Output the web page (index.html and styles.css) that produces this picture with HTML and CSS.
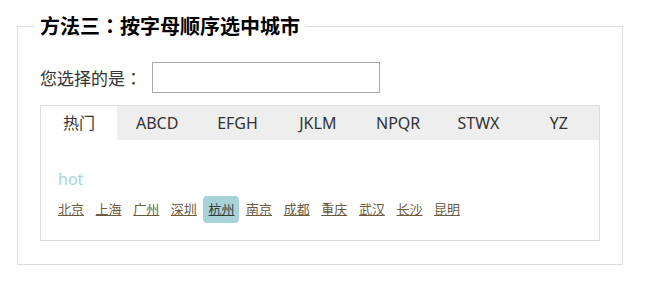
FILE: index.html
```html
<!DOCTYPE html>
<html lang="zh-CN">
<head>
    <meta charset="UTF-8">
    <title>城市选择</title>
    <link rel="stylesheet" href="styles.css">
</head>
<body>
    <fieldset class="picker">
        <legend>方法三<span class="colon" lang="ja">：</span>按字母顺序选中城市</legend>

        <div class="form-row">
            <label for="city">您选择的是<span class="colon" lang="ja">：</span></label>
            <input type="text" id="city">
        </div>

        <div class="tab-box">
            <ul class="tabs">
                <li class="active">热门</li>
                <li>ABCD</li>
                <li>EFGH</li>
                <li>JKLM</li>
                <li>NPQR</li>
                <li>STWX</li>
                <li>YZ</li>
            </ul>
            <div class="tab-panel">
                <p class="group-title">hot</p>
                <div class="cities">
                    <a href="#">北京</a>
                    <a href="#">上海</a>
                    <a href="#">广州</a>
                    <a href="#">深圳</a>
                    <a href="#" class="current">杭州</a>
                    <a href="#">南京</a>
                    <a href="#">成都</a>
                    <a href="#">重庆</a>
                    <a href="#">武汉</a>
                    <a href="#">长沙</a>
                    <a href="#">昆明</a>
                </div>
            </div>
        </div>
    </fieldset>
</body>
</html>
```

FILE: styles.css
```css
/* 基本 */
body {
    margin: 0;
    padding: 11px 0 0;
    font-family: 'Noto Sans', 'Noto Sans CJK SC', sans-serif;
    color: #333;
    background: #fff;
}

/* 外枠 */
.picker {
    width: 560px;
    margin: 0 0 0 17px;
    padding: 0 22px 23px;
    border: 1px solid #ddd;
}

.picker legend {
    margin-left: -6px;
    padding: 0 6px;
    font-family: 'Noto Sans CJK SC', sans-serif;
    font-size: 20px;
    font-weight: bold;
    color: #000;
    line-height: 30px;
}

/* 全角コロンを中央寄せで表示 */
.colon {
    font-family: 'Noto Sans CJK JP', sans-serif;
}

/* 入力欄 */
.form-row {
    display: flex;
    align-items: center;
    margin-top: 21px;
}

.form-row label {
    font-family: 'Noto Sans CJK SC', sans-serif;
    font-size: 17px;
    color: #333;
    margin-right: 10px;
}

.form-row input {
    width: 222px;
    height: 25px;
    padding: 2px;
    border: 1px solid #aaa;
    font-size: 14px;
}

/* タブ */
.tab-box {
    margin-top: 12px;
    border: 1px solid #ddd;
    height: 134px;
}

.tabs {
    display: flex;
    margin: 0;
    padding: 0;
    list-style: none;
    background: #eee;
}

.tabs li {
    flex: 1;
    height: 34px;
    line-height: 34px;
    text-align: center;
    font-size: 16px;
    color: #333;
}

.tabs li.active {
    background: #fff;
    flex: 0 0 76px;
}

.tab-panel {
    padding: 26px 17px 0;
}

.group-title {
    margin: 0;
    font-size: 16px;
    line-height: 26px;
    color: #a9d5da;
}

.cities {
    display: flex;
    gap: 1.6px;
    margin: 4px 0 0 -5px;
}

.cities a {
    padding: 0 5px;
    height: 27px;
    line-height: 27px;
    font-size: 13px;
    color: #6b5a3c;
    border-radius: 4px;
}

.cities a.current {
    background: #a6d3d8;
    color: #2f3a3c;
}
```
